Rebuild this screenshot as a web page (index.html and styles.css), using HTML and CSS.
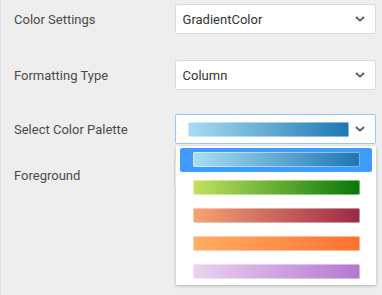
FILE: index.html
```html
<!DOCTYPE html>
<html lang="en">
<head>
  <meta charset="UTF-8">
  <title>Conditional Formatting</title>
  <link rel="stylesheet" href="styles.css">
</head>
<body>
  <div class="panel">
    <div class="row">
      <div class="label">Color Settings</div>
      <div class="select">
        <span class="value">GradientColor</span>
        <svg class="chevron" viewBox="0 0 10 6" width="10" height="6"><path d="M1 1l4 3.6L9 1" fill="none" stroke="#555" stroke-width="1.8"/></svg>
      </div>
    </div>
    <div class="row row-b">
      <div class="label">Formatting Type</div>
      <div class="select">
        <span class="value">Column</span>
        <svg class="chevron" viewBox="0 0 10 6" width="10" height="6"><path d="M1 1l4 3.6L9 1" fill="none" stroke="#555" stroke-width="1.8"/></svg>
      </div>
    </div>
    <div class="row row-c">
      <div class="label">Select Color Palette</div>
      <div class="select focused">
        <span class="bar blue sel-bar"></span>
        <svg class="chevron" viewBox="0 0 10 6" width="10" height="6"><path d="M1 1l4 3.6L9 1" fill="none" stroke="#555" stroke-width="1.8"/></svg>
        <div class="dropdown">
          <div class="item active"><span class="bar blue"></span></div>
          <div class="item"><span class="bar green"></span></div>
          <div class="item"><span class="bar red"></span></div>
          <div class="item"><span class="bar orange"></span></div>
          <div class="item"><span class="bar purple"></span></div>
        </div>
      </div>
    </div>
    <div class="row">
      <div class="label">Foreground</div>
      <div class="select fg"></div>
    </div>
  </div>
</body>
</html>
```

FILE: styles.css
```css
html, body {
  margin: 0;
  height: 100%;
}
body {
  background: #eeeeee;
  font-family: Roboto, 'Noto Sans', sans-serif;
  font-size: 13px;
  color: #444;
  border-left: 1px solid #dedede;
  box-sizing: border-box;
  overflow: hidden;
}
.panel {
  padding: 4px 6px 0 13px;
}
.row {
  display: flex;
  align-items: center;
  height: 30px;
  margin-bottom: 26px;
}
.row-b { margin-bottom: 24px; }
.row-c { margin-bottom: 16px; }
.label {
  width: 161px;
  color: #4a4a4a;
}
.select {
  position: relative;
  box-sizing: border-box;
  width: 202px;
  height: 30px;
  background: #fff;
  border: 1px solid #dcdcdc;
  border-radius: 2px;
  display: flex;
  align-items: center;
  padding: 0 10px 0 7px;
}
.select .value {
  flex: 1;
  color: #333;
}
.chevron {
  margin-left: auto;
}
.focused {
  border-color: #99c8f4;
  padding-left: 12px;
  z-index: 2;
}
.fg {
  margin-left: -1px;
}
.bar {
  display: block;
  height: 15px;
  border-radius: 2px;
  box-shadow: 0 0 0 1px rgba(255, 255, 255, 0.45) inset;
}
.sel-bar {
  width: 161px;
}
.blue { background: linear-gradient(90deg, #a9def2, #1b77b5); }
.green { background: linear-gradient(90deg, #c3e25e, #067806); }
.red { background: linear-gradient(90deg, #f6a473, #9c2846); }
.orange { background: linear-gradient(90deg, #ffae64, #ff712f); }
.purple { background: linear-gradient(90deg, #ebd2ef, #b477d3); }
.dropdown {
  position: absolute;
  top: 31px;
  left: 0;
  width: 200px;
  height: 139px;
  box-sizing: border-box;
  background: #fff;
  box-shadow: 0 1px 3px rgba(0, 0, 0, 0.25);
  padding: 2px 4px 0;
  display: flex;
  flex-direction: column;
  gap: 4px;
}
.item {
  height: 24px;
  padding: 4px 12px 0 13px;
  box-sizing: border-box;
  border-radius: 2px;
}
.item.active {
  background: #3e9cfd;
}
```
